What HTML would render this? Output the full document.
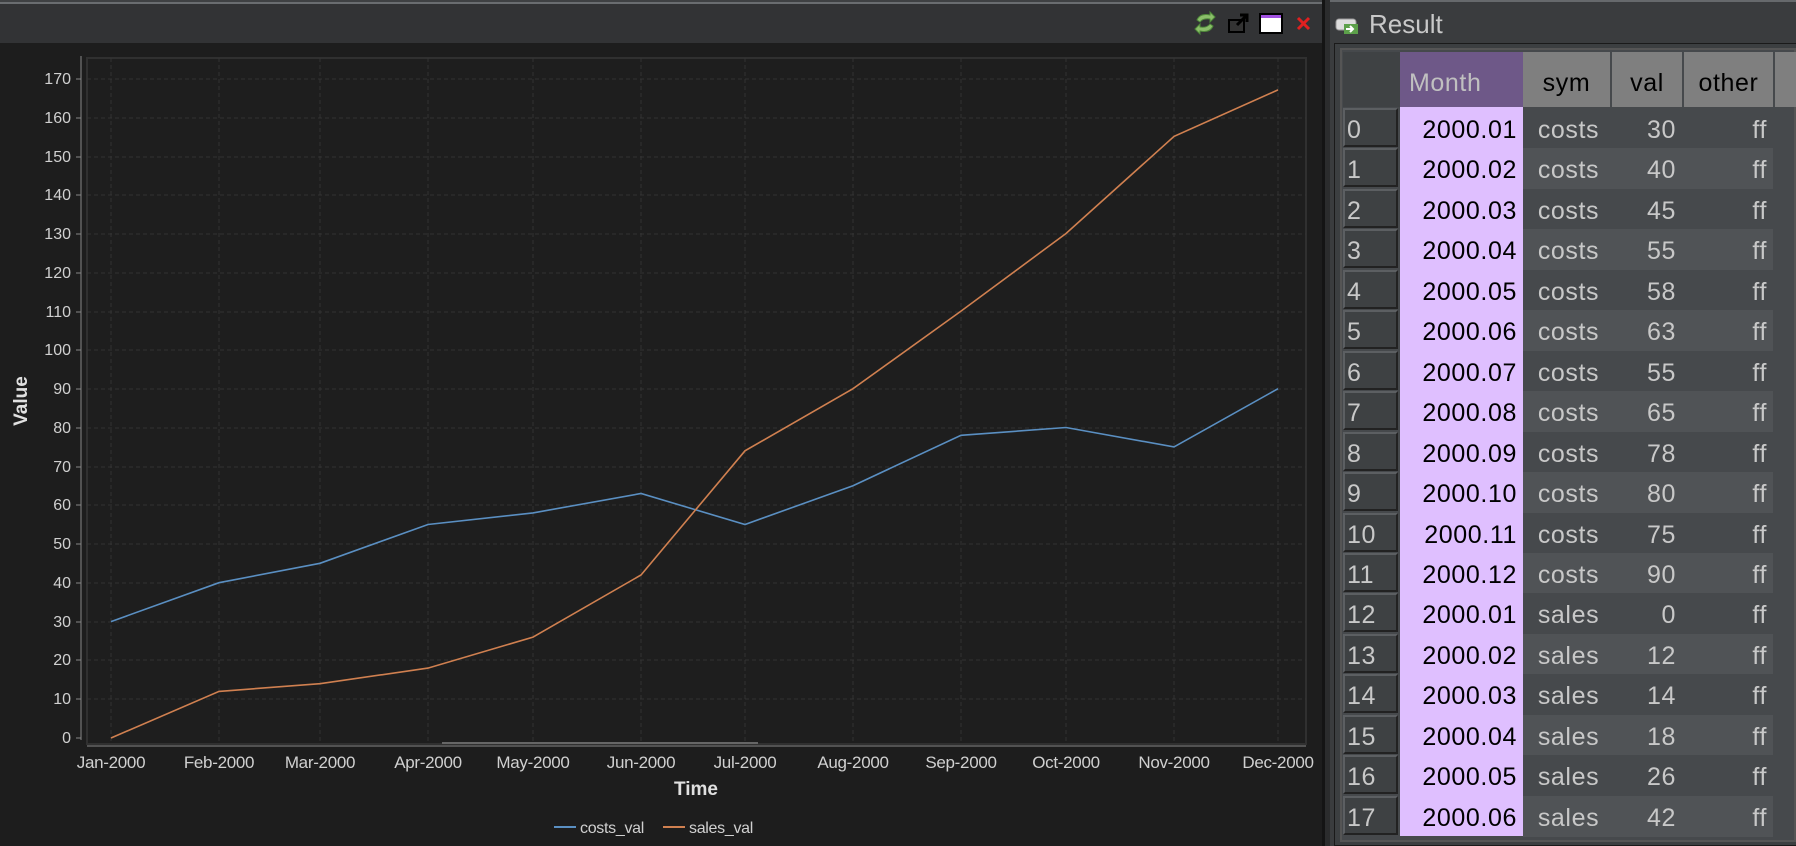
<!DOCTYPE html>
<html><head><meta charset="utf-8"><style>
*{margin:0;padding:0;box-sizing:border-box}
body{width:1796px;height:846px;background:#1d1d1d;position:relative;overflow:hidden;font-family:"Liberation Sans",sans-serif}
.abs{position:absolute}
.cell{position:absolute;height:40px;font-size:25px;line-height:44px;white-space:nowrap;letter-spacing:0.6px}
</style></head><body>
<div class="abs" style="left:0;top:0;width:1322px;height:43px;background:#323335;border-top:2px solid #3f4143"><div style="height:2px;background:#6a6d70;margin-top:0"></div></div>
<svg class="abs" style="left:1190px;top:8px" width="130" height="30" viewBox="1190 8 130 30">
<path d="M1197 20 q3-7 13-5 l0-3 5 5-5 5 0-3 q-7-1-10 3z" fill="#8bbf6a" stroke="#4f8a3a" stroke-width="1"/>
<path d="M1213 26 q-3 7-13 5 l0 3-5-5 5-5 0 3 q7 1 10-3z" fill="#8bbf6a" stroke="#4f8a3a" stroke-width="1"/>
<rect x="1229" y="20" width="15" height="12" fill="#333" stroke="#000" stroke-width="2"/>
<path d="M1237 25 l9-9 M1240 15 h7 v7" stroke="#000" stroke-width="3" fill="none"/>
<rect x="1260" y="14" width="22" height="19" fill="#fff" stroke="#000" stroke-width="2"/>
<rect x="1261" y="15" width="20" height="3" fill="#a050e0"/>
<path d="M1298 18 l11 11 M1309 18 l-11 11" stroke="#e02020" stroke-width="3"/>
</svg>
<div class="abs" style="left:1322px;top:0;width:8px;height:846px;background:#2b2c2d;border-left:3px solid #141414"></div>
<svg class="abs" style="left:0;top:43px" width="1322" height="803" viewBox="0 43 1322 803">
<rect x="0" y="43" width="1322" height="803" fill="#1d1d1d"/>
<rect x="87" y="58" width="1219" height="686" fill="#1e1e1e" stroke="#303030" stroke-width="2"/>
<g stroke="#333" stroke-width="1" stroke-dasharray="4,3">
<line x1="87" x2="1306" y1="79" y2="79"/><line x1="87" x2="1306" y1="118" y2="118"/><line x1="87" x2="1306" y1="157" y2="157"/><line x1="87" x2="1306" y1="195" y2="195"/><line x1="87" x2="1306" y1="234" y2="234"/><line x1="87" x2="1306" y1="273" y2="273"/><line x1="87" x2="1306" y1="312" y2="312"/><line x1="87" x2="1306" y1="350" y2="350"/><line x1="87" x2="1306" y1="389" y2="389"/><line x1="87" x2="1306" y1="428" y2="428"/><line x1="87" x2="1306" y1="467" y2="467"/><line x1="87" x2="1306" y1="505" y2="505"/><line x1="87" x2="1306" y1="544" y2="544"/><line x1="87" x2="1306" y1="583" y2="583"/><line x1="87" x2="1306" y1="622" y2="622"/><line x1="87" x2="1306" y1="660" y2="660"/><line x1="87" x2="1306" y1="699" y2="699"/>
<line y1="58" y2="744" x1="111" x2="111"/><line y1="58" y2="744" x1="219" x2="219"/><line y1="58" y2="744" x1="320" x2="320"/><line y1="58" y2="744" x1="428" x2="428"/><line y1="58" y2="744" x1="533" x2="533"/><line y1="58" y2="744" x1="641" x2="641"/><line y1="58" y2="744" x1="745" x2="745"/><line y1="58" y2="744" x1="853" x2="853"/><line y1="58" y2="744" x1="961" x2="961"/><line y1="58" y2="744" x1="1066" x2="1066"/><line y1="58" y2="744" x1="1174" x2="1174"/><line y1="58" y2="744" x1="1278" x2="1278"/>
</g>
<line x1="81" y1="56" x2="81" y2="740" stroke="#888" stroke-width="1"/>
<line x1="87" y1="746" x2="1306" y2="746" stroke="#888" stroke-width="1"/>
<line x1="442" y1="743" x2="758" y2="743" stroke="#666" stroke-width="2"/>
<g stroke="#888"><line x1="76" x2="81" y1="79" y2="79"/><line x1="76" x2="81" y1="118" y2="118"/><line x1="76" x2="81" y1="157" y2="157"/><line x1="76" x2="81" y1="195" y2="195"/><line x1="76" x2="81" y1="234" y2="234"/><line x1="76" x2="81" y1="273" y2="273"/><line x1="76" x2="81" y1="312" y2="312"/><line x1="76" x2="81" y1="350" y2="350"/><line x1="76" x2="81" y1="389" y2="389"/><line x1="76" x2="81" y1="428" y2="428"/><line x1="76" x2="81" y1="467" y2="467"/><line x1="76" x2="81" y1="505" y2="505"/><line x1="76" x2="81" y1="544" y2="544"/><line x1="76" x2="81" y1="583" y2="583"/><line x1="76" x2="81" y1="622" y2="622"/><line x1="76" x2="81" y1="660" y2="660"/><line x1="76" x2="81" y1="699" y2="699"/><line x1="76" x2="81" y1="738" y2="738"/></g>
<g fill="#d0d0d0" font-size="16" text-anchor="end" font-family="Liberation Sans, sans-serif">
<text x="71" y="84">170</text><text x="71" y="123">160</text><text x="71" y="162">150</text><text x="71" y="200">140</text><text x="71" y="239">130</text><text x="71" y="278">120</text><text x="71" y="317">110</text><text x="71" y="355">100</text><text x="71" y="394">90</text><text x="71" y="433">80</text><text x="71" y="472">70</text><text x="71" y="510">60</text><text x="71" y="549">50</text><text x="71" y="588">40</text><text x="71" y="627">30</text><text x="71" y="665">20</text><text x="71" y="704">10</text><text x="71" y="743">0</text>
</g>
<g fill="#d0d0d0" font-size="17" text-anchor="middle" font-family="Liberation Sans, sans-serif" letter-spacing="-0.3">
<text x="111" y="768">Jan-2000</text><text x="219" y="768">Feb-2000</text><text x="320" y="768">Mar-2000</text><text x="428" y="768">Apr-2000</text><text x="533" y="768">May-2000</text><text x="641" y="768">Jun-2000</text><text x="745" y="768">Jul-2000</text><text x="853" y="768">Aug-2000</text><text x="961" y="768">Sep-2000</text><text x="1066" y="768">Oct-2000</text><text x="1174" y="768">Nov-2000</text><text x="1278" y="768">Dec-2000</text>
</g>
<text x="696" y="795" fill="#e0e0e0" font-size="19" font-weight="bold" text-anchor="middle" font-family="Liberation Sans, sans-serif">Time</text>
<text transform="translate(27,401) rotate(-90)" fill="#e0e0e0" font-size="19" font-weight="bold" text-anchor="middle" font-family="Liberation Sans, sans-serif">Value</text>
<polyline fill="none" stroke="#5a8fc2" stroke-width="1.6" points="111,621.6 219,582.7 320,563.3 428,524.5 533,512.9 641,493.5 745,524.5 853,485.7 961,435.3 1066,427.5 1174,446.9 1278,388.7"/>
<polyline fill="none" stroke="#d08050" stroke-width="1.6" points="111,738 219,691.4 320,683.7 428,668.1 533,637.1 641,575 745,450.8 853,388.7 961,311.1 1066,233.5 1174,136.4 1278,89.9"/>
<line x1="554" y1="827" x2="576" y2="827" stroke="#5a8fc2" stroke-width="2"/>
<text x="580" y="833" fill="#d0d0d0" font-size="16" font-family="Liberation Sans, sans-serif" letter-spacing="-0.3">costs_val</text>
<line x1="663" y1="827" x2="685" y2="827" stroke="#d08050" stroke-width="2"/>
<text x="689" y="833" fill="#d0d0d0" font-size="16" font-family="Liberation Sans, sans-serif" letter-spacing="-0.3">sales_val</text>
</svg>
<div class="abs" style="left:1330px;top:0;width:466px;height:846px;background:#3a3c3e;border-top:2px solid #66696c"></div>
<svg class="abs" style="left:1334px;top:16px" width="30" height="20"><rect x="2" y="3" width="20" height="11" rx="3" fill="#ddd" stroke="#999"/><rect x="10" y="8" width="14" height="10" fill="#5ca04a"/><path d="M12 13 h7 M16 10 l3 3-3 3" stroke="#fff" stroke-width="2" fill="none"/></svg>
<div class="abs" style="left:1369px;top:9px;font-size:26px;color:#c8c8c8;font-family:'Liberation Sans',sans-serif">Result</div>
<div class="abs" style="left:1334px;top:43px;width:462px;height:803px;background:#3c3f41;border:1px solid #1a1a1a;border-right:none"></div>
<div class="abs" style="left:1340px;top:48px;width:456px;height:794px;background:#46494c;border:2px solid #555"></div>
<div class="abs" style="left:1343px;top:52px;width:57px;height:55px;background:#3f4244"></div>
<div class="abs" style="left:1400px;top:52px;width:123px;height:55px;background:#6e5888;color:#c0c0c0;font-size:25px;letter-spacing:0.6px;line-height:62px;padding-left:9px">Month</div>
<div class="abs" style="left:1523px;top:52px;width:87px;height:55px;background:#7f7f7f;color:#000;font-size:25px;letter-spacing:0.6px;line-height:62px;text-align:center">sym</div>
<div class="abs" style="left:1612px;top:52px;width:70px;height:55px;background:#7f7f7f;color:#000;font-size:25px;letter-spacing:0.6px;line-height:62px;text-align:center">val</div>
<div class="abs" style="left:1684px;top:52px;width:89px;height:55px;background:#7f7f7f;color:#000;font-size:25px;letter-spacing:0.6px;line-height:62px;text-align:center">other</div>
<div class="abs" style="left:1775px;top:52px;width:21px;height:55px;background:#7f7f7f"></div>
<div class="abs" style="left:1400px;top:107px;width:123px;height:729px;background:#dfbfff"></div>
<div id="rows"></div>
<script>
var d=[["2000.01","costs",30],["2000.02","costs",40],["2000.03","costs",45],["2000.04","costs",55],["2000.05","costs",58],["2000.06","costs",63],["2000.07","costs",55],["2000.08","costs",65],["2000.09","costs",78],["2000.10","costs",80],["2000.11","costs",75],["2000.12","costs",90],["2000.01","sales",0],["2000.02","sales",12],["2000.03","sales",14],["2000.04","sales",18],["2000.05","sales",26],["2000.06","sales",42]];
var h="";
for(var i=0;i<18;i++){var y=108+i*40.45;var t=Math.round(y);
h+='<div class="abs" style="left:1523px;top:'+t+'px;width:250px;height:41px;background:'+(i%2?'#505356':'#46494c')+'"></div>';
h+='<div class="abs" style="left:1343px;top:'+t+'px;width:55px;height:39px;background:#3e4143;border:2px solid;border-color:#5c5f62 #222 #222 #5c5f62"></div>';
h+='<div class="cell" style="left:1347px;top:'+t+'px;color:#c8c8c8">'+i+'</div>';
h+='<div class="cell" style="left:1400px;width:117px;text-align:right;top:'+t+'px;color:#000">'+d[i][0]+'</div>';
h+='<div class="cell" style="left:1523px;width:91px;text-align:center;top:'+t+'px;color:#c8c8c8">'+d[i][1]+'</div>';
h+='<div class="cell" style="left:1612px;width:64px;text-align:right;top:'+t+'px;color:#c8c8c8">'+d[i][2]+'</div>';
h+='<div class="cell" style="left:1684px;width:83px;text-align:right;top:'+t+'px;color:#c8c8c8">ff</div>';}
document.getElementById("rows").innerHTML=h;
</script>
</body></html>
